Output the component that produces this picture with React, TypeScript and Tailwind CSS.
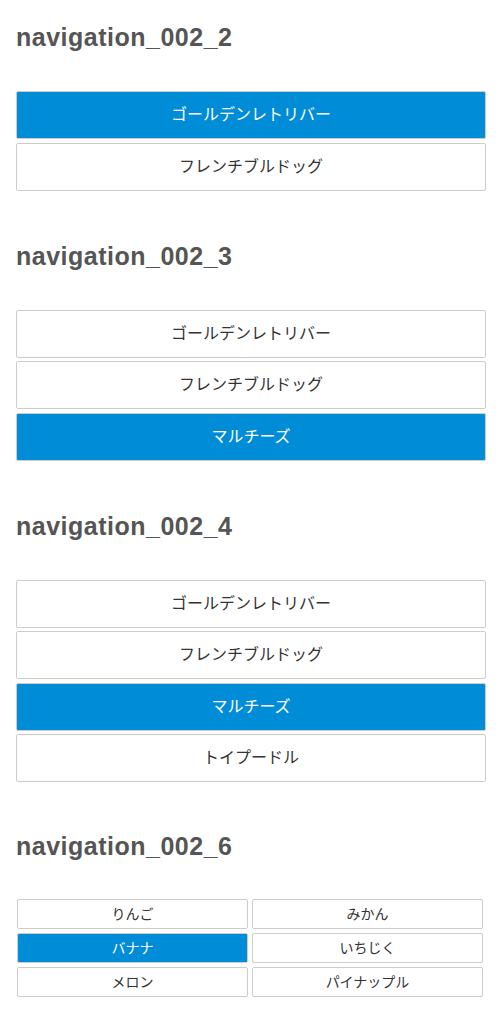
import React from "react";

const font = { fontFamily: '"Liberation Sans", "Noto Sans CJK JP", sans-serif' };

function Heading({ children }: { children: React.ReactNode }) {
  return (
    <h2 className="text-[25px] leading-[29px] font-bold text-[#555] tracking-[0.5px]">{children}</h2>
  );
}

function NavButton({ label, active, small }: { label: string; active?: boolean; small?: boolean }) {
  const base = small
    ? "h-[30px] text-[14px]"
    : "h-[48px] text-[16px]";
  return (
    <a
      href="#"
      className={
        "flex items-center justify-center rounded-[2px] border border-[#cccccc] " +
        base +
        (active ? " bg-[#008cd6] text-white" : " bg-white text-[#333]")
      }
    >
      {label}
    </a>
  );
}

function List({ items, active }: { items: string[]; active: number }) {
  return (
    <div className="mt-[39px] flex flex-col gap-[3.5px]">
      {items.map((t, i) => (
        <NavButton key={t} label={t} active={i === active} />
      ))}
    </div>
  );
}

export default function App() {
  return (
    <div className="bg-white min-h-[1023px] pl-4 pr-[14px] pt-[23px]" style={font}>
      <section>
        <Heading>navigation_002_2</Heading>
        <List items={["ゴールデンレトリバー", "フレンチブルドッグ"]} active={0} />
      </section>
      <section className="mt-[51px]">
        <Heading>navigation_002_3</Heading>
        <List items={["ゴールデンレトリバー", "フレンチブルドッグ", "マルチーズ"]} active={2} />
      </section>
      <section className="mt-[51px]">
        <Heading>navigation_002_4</Heading>
        <List items={["ゴールデンレトリバー", "フレンチブルドッグ", "マルチーズ", "トイプードル"]} active={2} />
      </section>
      <section className="mt-[50px]">
        <Heading>navigation_002_6</Heading>
        <div className="mt-[38px] ml-[1px] mr-[3px] grid grid-cols-2 gap-x-[4px] gap-y-[4px]">
          {["りんご", "みかん", "バナナ", "いちじく", "メロン", "パイナップル"].map((t, i) => (
            <NavButton key={t} label={t} active={i === 2} small />
          ))}
        </div>
      </section>
    </div>
  );
}
